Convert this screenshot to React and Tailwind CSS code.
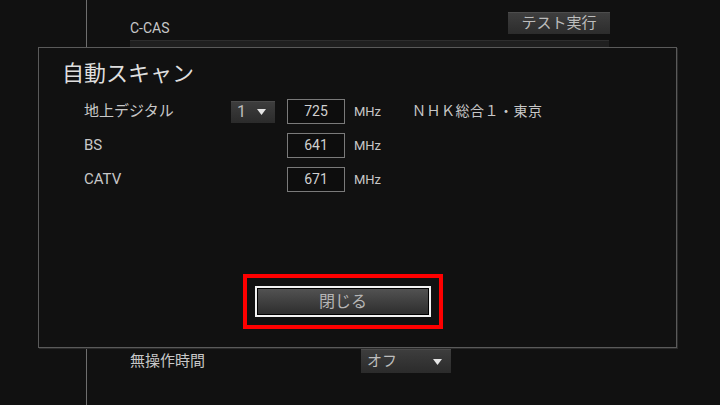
import React from 'react';

const font = { fontFamily: 'Roboto, "Noto Sans CJK JP", sans-serif' };

// small white triangle used on the pull-down selectors
function Caret() {
  return (
    <svg width="9" height="6" viewBox="0 0 9 6" className="shrink-0">
      <path d="M0 0 H9 L4.5 6 Z" fill="#e5e5e5" />
    </svg>
  );
}

function Select({ value, className }) {
  return (
    <div
      className={`flex items-center justify-between pl-[6px] pr-[9px] bg-gradient-to-b from-[#3d3d3d] to-[#2b2b2b] border-t border-[#4a4a4a] text-[15px] text-[#bdbdbd] ${className}`}
    >
      <span>{value}</span>
      <Caret />
    </div>
  );
}

function FreqRow({ label, freq, channel, station }) {
  return (
    <div className="flex items-center h-[25px]">
      <div className="w-[192px] pl-[45px] text-[15px] text-[#c8c8c8] whitespace-nowrap">{label}</div>
      <div className="w-[56px]">
        {channel && <Select value={channel} className="w-[44px] h-[22px] text-[16px]" />}
      </div>
      <div className="w-[58px] h-[25px] border border-[#7a7a7a] bg-[#0d0d0d] flex items-center justify-center text-[14px] text-[#d0d0d0]">
        {freq}
      </div>
      <div className="ml-[9px] text-[13px] text-[#c8c8c8] w-[58px]">MHz</div>
      {station && <div className="text-[14px] text-[#c8c8c8] tracking-[0.5px]">{station}</div>}
    </div>
  );
}

export default function App() {
  return (
    <div className="relative w-[720px] h-[405px] bg-[#111111] overflow-hidden" style={font}>
      {/* settings page behind the dialog */}
      <div className="ml-[86px] h-full w-[524px] border-l border-[#6e6e6e] pl-[43px] flex flex-col">
        <div className="flex items-end justify-between pt-[12px] h-[34px]">
          <span className="text-[14px] text-[#c8c8c8] leading-none mb-[-1px]">C-CAS</span>
          <button className="w-[102px] h-[22px] bg-gradient-to-b from-[#3e3e3e] to-[#2c2c2c] border-t border-[#4d4d4d] text-[15px] text-[#bdbdbd] leading-none">
            テスト実行
          </button>
        </div>
        <div className="mt-[6px] h-[30px] w-[479px] bg-[#1f1f1f] border-t border-[#2e2e2e]" />
        <div className="mt-[279px] flex items-center h-[24px]">
          <span className="w-[231px] text-[15px] text-[#c8c8c8]">無操作時間</span>
          <Select value="オフ" className="w-[90px] h-[24px]" />
        </div>
      </div>

      {/* auto scan dialog */}
      <div className="absolute left-[38px] top-[47px] w-[639px] h-[301px] bg-[#111111] border border-[#5a5a5a] shadow-[1px_1px_0_#2a2a2a] flex flex-col">
        <div className="pl-[23px] pt-[13px] text-[22px] text-[#dedede] leading-[26px]">自動スキャン</div>
        <div className="mt-[12px] flex flex-col gap-[9px]">
          <FreqRow label="地上デジタル" channel="1" freq="725" station="ＮＨＫ総合１・東京" />
          <FreqRow label="BS" freq="641" />
          <FreqRow label="CATV" freq="671" />
        </div>
        <div className="flex-1" />
        <div className="ml-[204px] mb-[18px] w-[200px] h-[55px] border-4 border-[#ff0000] p-[8px]">
          <div className="h-[31px] w-[176px] border-2 border-[#f2f2f2] p-px bg-black">
            <button className="w-full h-full bg-gradient-to-b from-[#525252] to-[#2e2e2e] text-[16px] text-[#b5b5b5] leading-none">
              閉じる
            </button>
          </div>
        </div>
      </div>
    </div>
  );
}
